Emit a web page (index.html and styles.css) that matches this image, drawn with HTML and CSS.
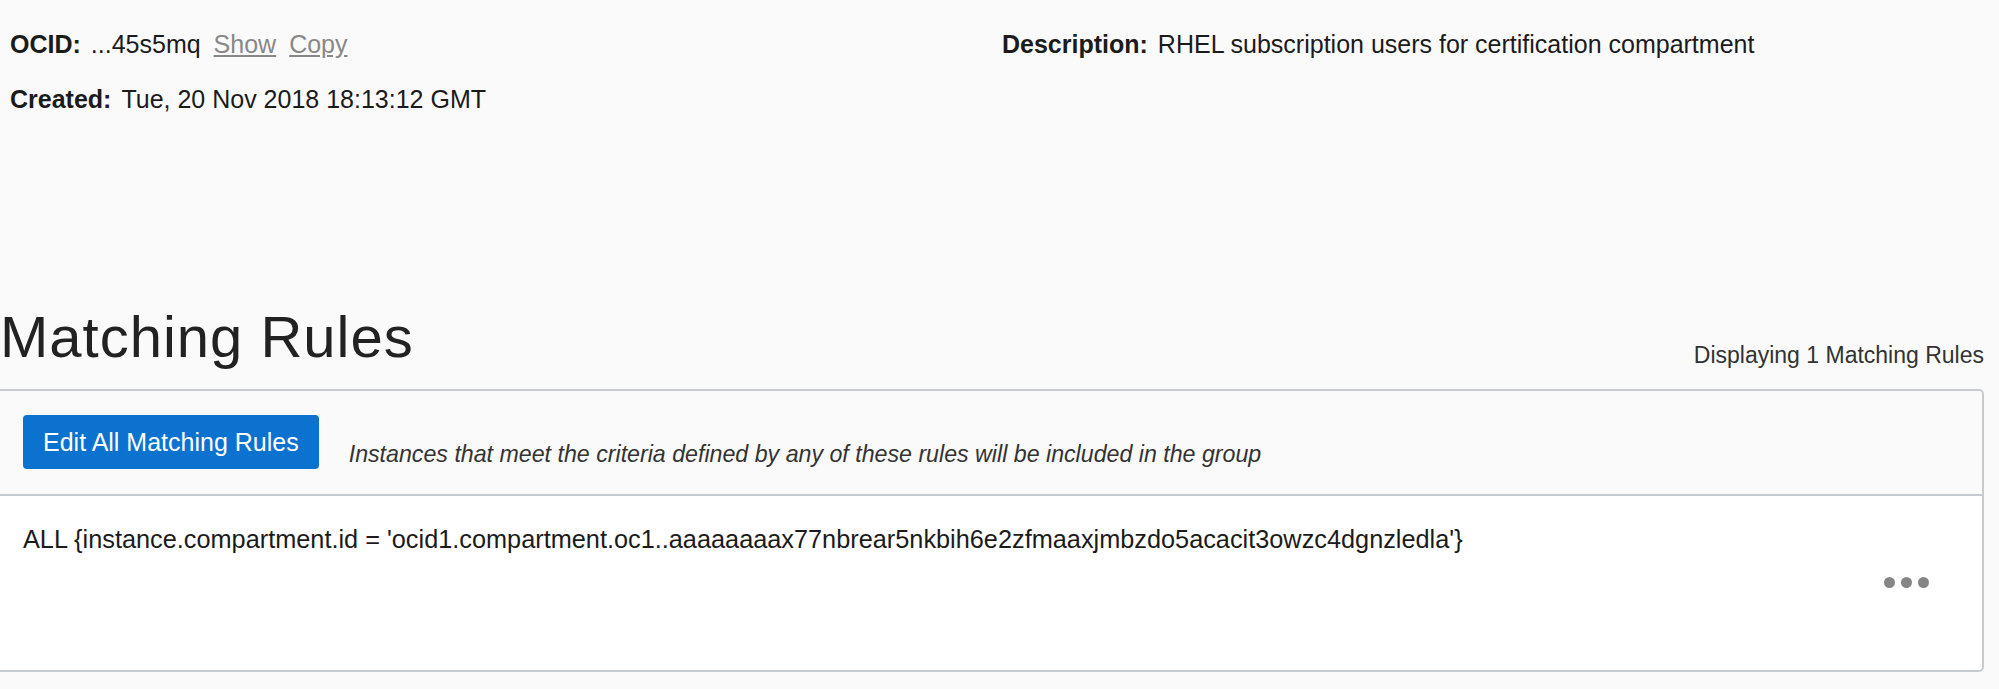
FILE: index.html
```html
<!DOCTYPE html>
<html>
<head>
<meta charset="utf-8">
<link rel="stylesheet" href="styles.css">
</head>
<body>
<div class="page">
  <section class="details">
    <div class="col col-left">
      <div class="field"><span class="label">OCID:</span><span class="value">...45s5mq</span><a class="link">Show</a><a class="link">Copy</a></div>
      <div class="field"><span class="label">Created:</span><span class="value">Tue, 20 Nov 2018 18:13:12 GMT</span></div>
    </div>
    <div class="col col-right">
      <div class="field"><span class="label">Description:</span><span class="value">RHEL subscription users for certification compartment</span></div>
    </div>
  </section>

  <div class="section-head">
    <h2 class="title">Matching Rules</h2>
    <div class="count">Displaying 1 Matching Rules</div>
  </div>

  <div class="panel">
    <div class="toolbar">
      <button class="btn-primary">Edit All Matching Rules</button>
      <span class="hint">Instances that meet the criteria defined by any of these rules will be included in the group</span>
    </div>
    <div class="rule-row">
      <div class="rule-text">ALL {instance.compartment.id = 'ocid1.compartment.oc1..aaaaaaaax77nbrear5nkbih6e2zfmaaxjmbzdo5acacit3owzc4dgnzledla'}</div>
      <div class="rule-actions">
        <span class="dots"><span class="dot"></span><span class="dot"></span><span class="dot"></span></span>
      </div>
    </div>
  </div>
</div>
</body>
</html>
```
FILE: styles.css
```css
html, body {
  margin: 0;
  padding: 0;
  background: #fafafa;
}
body {
  font-family: "Liberation Sans", Arial, sans-serif;
  color: #1b1b1b;
}
.page {
  width: 1984px;
}
.details {
  display: grid;
  grid-template-columns: 992px 1fr;
  padding: 29px 0 0 10px;
}
.col {
  display: flex;
  flex-direction: column;
  gap: 25px;
}
.field {
  font-size: 25px;
  line-height: 30px;
  white-space: nowrap;
}
.label {
  font-weight: 700;
  margin-right: 10px;
}
.link {
  color: #888888;
  text-decoration: underline;
  margin-left: 13px;
}
.section-head {
  display: flex;
  justify-content: space-between;
  align-items: flex-end;
  margin-top: 190px;
  margin-bottom: 19px;
}
.title {
  margin: 0;
  font-size: 58px;
  line-height: 66px;
  font-weight: 400;
  color: #222222;
  letter-spacing: 1px;
}
.count {
  font-size: 23px;
  line-height: 26px;
  color: #333333;
  padding-bottom: 2px;
}
.panel {
  border: 2px solid #c7cbcf;
  border-left: none;
  border-radius: 0 5px 5px 0;
  background: #ffffff;
}
.toolbar {
  display: flex;
  align-items: flex-end;
  gap: 30px;
  padding: 24px 23px 25px;
  background: #fafafa;
  border-bottom: 2px solid #c7cbcf;
  border-top-right-radius: 4px;
}
.btn-primary {
  height: 54px;
  padding: 0 20px;
  border: none;
  border-radius: 4px;
  background: #0b72d0;
  color: #ffffff;
  font-family: "Liberation Sans", Arial, sans-serif;
  font-size: 25px;
}
.hint {
  font-style: italic;
  font-size: 23.2px;
  line-height: 26px;
  color: #333333;
  margin-bottom: 2px;
}
.rule-row {
  display: flex;
  flex-direction: column;
  padding: 28px 53px 0 23px;
  height: 146px;
}
.rule-text {
  font-size: 25.3px;
  line-height: 30px;
  color: #1b1b1b;
}
.rule-actions {
  display: flex;
  justify-content: flex-end;
  margin-top: 23px;
}
.dots {
  display: flex;
  gap: 6px;
}
.dot {
  width: 11px;
  height: 11px;
  border-radius: 50%;
  background: #858585;
}
```
